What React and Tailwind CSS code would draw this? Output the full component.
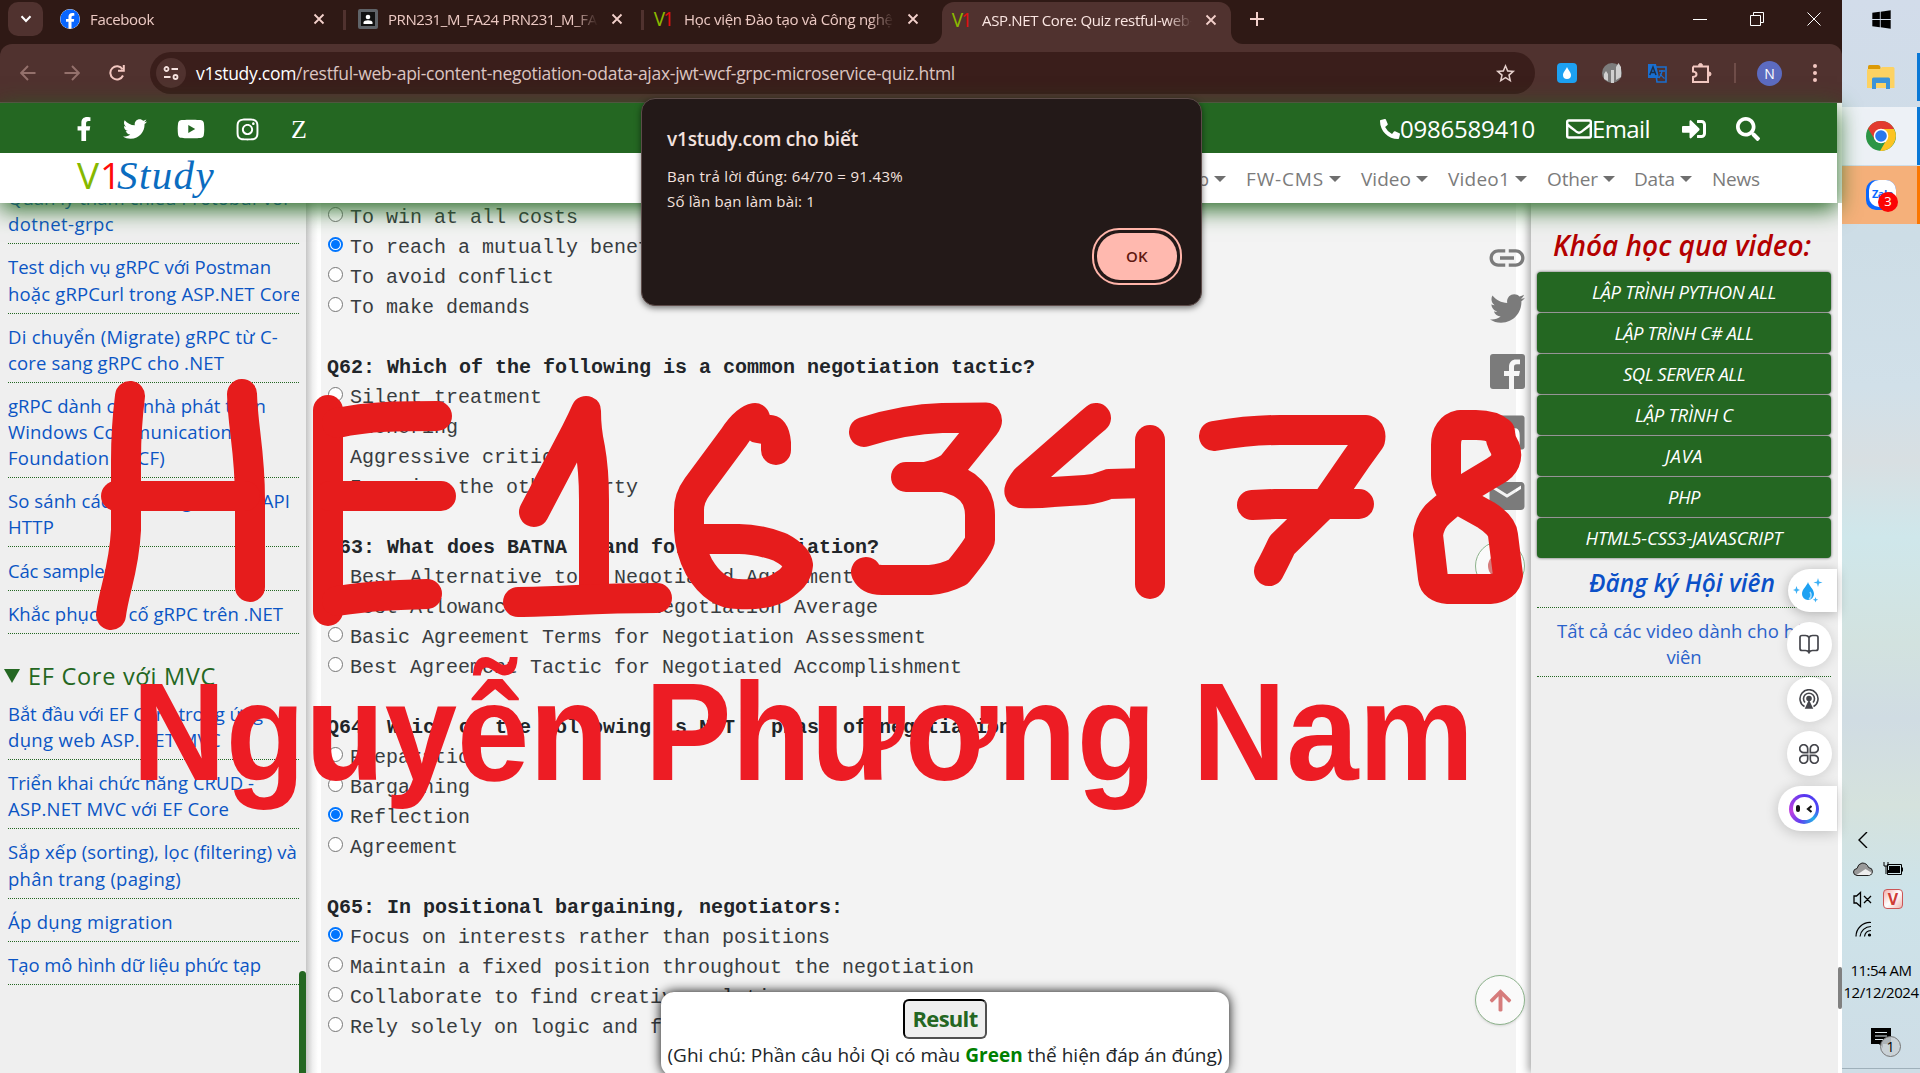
import React, { useLayoutEffect, useRef } from "react";
import {
  FaFacebookF, FaFacebook, FaTwitter, FaYoutube, FaInstagram, FaPhoneAlt, FaRegEnvelope,
  FaSignInAlt, FaSearch, FaLinkedin, FaArrowUp, FaWindows,
} from "react-icons/fa";
import { MdLink, MdEmail, MdGTranslate, MdOutlineExtension, MdStarBorder } from "react-icons/md";

/* A single line of text tuned to a given width, by tracking or by horizontal scale. */
function Fit({ w, scale = false, className = "", children }) {
  const ref = useRef(null);
  useLayoutEffect(() => {
    const el = ref.current;
    el.style.letterSpacing = "0px";
    el.style.transform = "none";
    const natural = el.getBoundingClientRect().width;
    const n = Math.max(1, el.textContent.length);
    if (scale) el.style.transform = "scaleX(" + w / natural + ")";
    else el.style.letterSpacing = (w - natural) / n + "px";
  }, [w, scale]);
  return (
    <span ref={ref} className={"inline-block origin-left whitespace-pre " + className}>{children}</span>
  );
}

function V1() {
  return (
    <span className="flex w-5 justify-center font-['Noto_Sans'] text-[19px] leading-5">
      <span className="text-[#8bb800]">V</span>
      <span className="-ml-0.5 text-[#e01010]">1</span>
    </span>
  );
}

function Cross({ className = "" }) {
  return (
    <svg viewBox="0 0 12 12" className={"size-3 shrink-0 " + className} fill="none" stroke="#f3d0cb" strokeWidth="1.8">
      <path d="M1.5 1.5l9 9M10.5 1.5l-9 9" />
    </svg>
  );
}

function Tab({ icon, children, w, className }) {
  return (
    <div className={"flex items-center " + className}>
      {icon}
      <div className="ml-[10px] w-[210px] shrink-0 overflow-hidden whitespace-nowrap [mask-image:linear-gradient(90deg,#000_88%,transparent)]">
        <Fit w={w}>{children}</Fit>
      </div>
      <Cross className="ml-[13px]" />
    </div>
  );
}

function TabStrip() {
  return (
    <div className="flex h-11 bg-[#2f1915] text-[15px] text-[#ecc9c3]">
      <div className="ml-2 mt-0.5 flex h-[34px] w-[35px] items-center justify-center rounded-[10px] bg-[#50322f]">
        <svg viewBox="0 0 12 8" className="h-2 w-3" fill="none" stroke="#fff" strokeWidth="2"><path d="M1.5 1.2L6 6l4.500-4.800" /></svg>
      </div>
      <Tab
        className="ml-[17px] h-[38px] w-[283px]"
        w={64}
        icon={<FaFacebook className="size-5 shrink-0 rounded-full bg-white text-[#0866ff]" />}
      >Facebook</Tab>
      <div className="mt-[10px] h-5 w-[3px] bg-[#50322f]" />
      <Tab
        className="ml-[12px] h-[38px] w-[283px]"
        w={225}
        icon={
          <svg viewBox="0 0 20 20" className="size-5 shrink-0">
            <rect width="20" height="20" rx="2" fill="#5f6368" /><rect x="3" y="3" width="14" height="14" fill="#111" />
            <circle cx="10" cy="8" r="2.300" fill="#fff" /><path d="M5.500 15v-1.500c0-3 9-3 9 0V15z" fill="#fff" />
          </svg>
        }
      >PRN231_M_FA24 PRN231_M_FA24</Tab>
      <div className="mt-[10px] h-5 w-[3px] bg-[#50322f]" />
      <Tab className="ml-[10px] h-[38px] w-[276px]" w={221} icon={<V1 />}>Học viện Đào tạo và Công nghệ V</Tab>
      <div className="w-3 self-end overflow-hidden bg-[#50322f]"><div className="h-3 rounded-br-xl bg-[#2f1915]" /></div>
      <div className="mt-0.5 flex w-[289px] rounded-t-xl bg-[#50322f] text-[#fbe6e2]">
        <Tab className="ml-[10px] h-[36px]" w={220} icon={<V1 />}>ASP.NET Core: Quiz restful-web-a</Tab>
      </div>
      <div className="w-3 self-end overflow-hidden bg-[#50322f]"><div className="h-3 rounded-bl-xl bg-[#2f1915]" /></div>
      <svg viewBox="0 0 14 14" className="ml-[7px] mt-3 size-3.5" stroke="#f3d0cb" strokeWidth="2"><path d="M7 0v14M0 7h14" /></svg>
      <div className="ml-auto mr-[21px] flex h-[38px] items-center gap-[43px]">
        <svg viewBox="0 0 14 14" className="size-3.5" stroke="#fff"><path d="M0 7.500h14" /></svg>
        <svg viewBox="0 0 14 14" className="size-3.5" stroke="#fff" fill="none"><path d="M.5 3.500h10v10H.5zM3.500 3V.5h10v10H11" /></svg>
        <svg viewBox="0 0 14 14" className="size-3.5" stroke="#fff" fill="none"><path d="M.5.5l13 13M13.500.5l-13 13" /></svg>
      </div>
    </div>
  );
}

function Toolbar() {
  return (
    <div className="bg-[#2f1915]">
      <div className="flex h-[59px] items-center rounded-t-xl border-b border-[#62504d] bg-[#50322f]">
        <svg viewBox="0 0 16 16" className="ml-5 size-4" fill="none" stroke="#94716c" strokeWidth="1.900"><path d="M15.500 8H1.500M8 1L1.200 8 8 15" /></svg>
        <svg viewBox="0 0 16 16" className="ml-[28px] size-4" fill="none" stroke="#94716c" strokeWidth="1.900"><path d="M.5 8h14M8 1l6.800 7L8 15" /></svg>
        <svg viewBox="0 0 16 16" className="ml-[29px] size-4" fill="none" stroke="#f3c8c1" strokeWidth="2"><path d="M14 10.500A6.600 6.600 0 1 1 13.500 4.300M14.800 0v5.800H9" /></svg>
        <div className="ml-[25px] flex h-[42px] w-[1385px] items-center rounded-full bg-[#3a1e1b]">
          <div className="ml-1.5 flex size-[30px] items-center justify-center rounded-full bg-[#50322f]">
            <svg viewBox="0 0 16 16" className="size-4" fill="none" stroke="#f5e2df" strokeWidth="1.800"><circle cx="3.500" cy="4" r="2" /><path d="M8.500 4H15M1 12h6.500" /><circle cx="12.500" cy="12" r="2" /></svg>
          </div>
          <div className="ml-[10px] text-[17.500px] text-[#dcc5c1]">
            <Fit w={759}><span className="text-white">v1study.com</span>/restful-web-api-content-negotiation-odata-ajax-jwt-wcf-grpc-microservice-quiz.html</Fit>
          </div>
          <MdStarBorder className="ml-auto mr-[18px] size-[23px] text-[#e6d0cc]" />
        </div>
        <div className="ml-[22px] flex size-5 items-center justify-center rounded-sm bg-[#1da1f2]">
          <svg viewBox="0 0 8 12" className="h-3 w-2" fill="#fff"><path d="M4 0c1 3 4 5 4 8a4 4 0 0 1-8 0c0-3 3-5 4-8z" /></svg>
        </div>
        <svg viewBox="0 0 20 20" className="ml-[25px] size-5"><circle cx="10" cy="10" r="10" fill="#7c7c7c" /><path d="M2 16v-5l2-3 2 3v7zM9 7h3v13H9zM14 17V4l2.500-4L19 4v10z" fill="#d0d0d0" /></svg>
        <svg viewBox="0 0 20 20" className="ml-[25px] size-5">
          <path d="M8 4h11v15h-9z" fill="none" stroke="#1a6fd0" strokeWidth="1.600" />
          <path d="M1 1h8l3 14H1z" fill="#1a6fd0" />
          <path d="M2.800 12L6 4l3 8M4 9.500h4" fill="none" stroke="#1b2f4a" strokeWidth="1.500" />
          <path d="M12 8h6M15 7v1c0 3-1.500 5-3 7M13 10.500c1 2 2.500 3.500 4.500 5" fill="none" stroke="#1a6fd0" strokeWidth="1.300" />
        </svg>
        <svg viewBox="0 0 22 22" className="ml-[24px] size-[22px]" fill="none" stroke="#f3c8c1" strokeWidth="2">
          <path d="M2 4.500h15v5M17 14v6H2v-5q3.500-.5 3.500-2.800T2 9.500V4.500M17 9.500V14" />
          <path d="M7.500 3.500a2 2 0 0 1 4 0zM18 10a2 2 0 0 1 0 4z" fill="#f3c8c1" strokeWidth="1" />
        </svg>
        <div className="ml-[21px] h-5 w-0.5 bg-[#6f4d49]" />
        <div className="ml-[21px] flex size-[25px] items-center justify-center rounded-full bg-[#5c6bc0] text-[14px] font-medium text-white">N</div>
        <div className="ml-[31px] flex flex-col gap-[3px]">
          <i className="size-1 rounded-full bg-[#f3c8c1]" /><i className="size-1 rounded-full bg-[#f3c8c1]" /><i className="size-1 rounded-full bg-[#f3c8c1]" />
        </div>
      </div>
    </div>
  );
}

function NavItem({ w, children, caret = true, className }) {
  return (
    <div className={"flex items-center " + className}>
      <Fit w={w}>{children}</Fit>
      {caret && <i className="ml-[5px] border-x-[6px] border-t-[6px] border-x-transparent border-t-[#6f6f6f]" />}
    </div>
  );
}

function SiteHeader() {
  return (
    <div className="relative z-10 mr-[5px] shadow-[0_6px_22px_#246722]">
      <div className="flex h-[50px] items-center bg-[#246722] pt-0.5 text-[24px] text-white">
        <FaFacebookF className="ml-[72px] size-[24px]" />
        <FaTwitter className="ml-[27px] size-[24px]" />
        <FaYoutube className="ml-[30px] size-[28px]" />
        <FaInstagram className="ml-[30px] size-[25px]" />
        <span className="ml-[31px] font-['Liberation_Serif'] text-[26px]">Z</span>
        <div className="ml-auto flex items-center">
          <FaPhoneAlt className="size-[20px]" />
          <Fit w={135}>0986589410</Fit>
          <FaRegEnvelope className="ml-[31px] size-[26px]" />
          <Fit w={58}>Email</Fit>
          <FaSignInAlt className="ml-[32px] size-[24px]" />
          <FaSearch className="ml-[30px] mr-[77px] size-[24px]" />
        </div>
      </div>
      <div className="flex h-[50px] items-center bg-white pt-0.5 text-[19px] text-[#7b7b7b]">
        <div className="ml-[77px] flex items-baseline pb-2 leading-none">
          <Fit w={23} className="text-[37px] text-[#86b800]">V</Fit>
          <Fit w={17} scale className="w-[17px] text-[37px] text-[#ff0a0a]">1</Fit>
          <Fit w={98} className="font-['Liberation_Serif'] text-[41px] italic text-[#0a6cc0]">Study</Fit>
        </div>
        <NavItem w={60} className="ml-auto">DevOp</NavItem>
        <NavItem w={78} className="ml-[20px]">FW-CMS</NavItem>
        <NavItem w={50} className="ml-[20px]">Video</NavItem>
        <NavItem w={62} className="ml-[20px]">Video1</NavItem>
        <NavItem w={51} className="ml-[20px]">Other</NavItem>
        <NavItem w={41} className="ml-[19px]">Data</NavItem>
        <NavItem w={48} className="ml-[20px] mr-[77px]" caret={false}>News</NavItem>
      </div>
    </div>
  );
}

function SideItem({ lines }) {
  return (
    <div className="flex flex-col border-b border-dotted border-[#246722] pb-[5.900px] pt-[10.200px] leading-[26.100px]">
      {lines.map(([t, w]) => <div key={t} className="h-[26.100px]"><Fit w={w}>{t}</Fit></div>)}
    </div>
  );
}

const LEFT_TOP = [
  [["Quản lý tham chiếu Protobuf với", 280], ["dotnet-grpc", 106]],
  [["Test dịch vụ gRPC với Postman", 263], ["hoặc gRPCurl trong ASP.NET Core", 293]],
  [["Di chuyển (Migrate) gRPC từ C-", 270], ["core sang gRPC cho .NET", 216]],
  [["gRPC dành cho nhà phát triển", 258], ["Windows Communication", 224], ["Foundation (WCF)", 157]],
  [["So sánh các dịch vụ gRPC với API", 282], ["HTTP", 46]],
  [["Các samples", 105]],
  [["Khắc phục sự cố gRPC trên .NET", 275]],
];
const LEFT_BOTTOM = [
  [["Bắt đầu với EF Core trong ứng", 255], ["dụng web ASP.NET MVC", 213]],
  [["Triển khai chức năng CRUD -", 246], ["ASP.NET MVC với EF Core", 221]],
  [["Sắp xếp (sorting), lọc (filtering) và", 289], ["phân trang (paging)", 173]],
  [["Áp dụng migration", 165]],
  [["Tạo mô hình dữ liệu phức tạp", 253]],
];

function LeftSidebar() {
  return (
    <div className="flex w-[306px] shrink-0 bg-[#efefef]">
      <div className="w-[299px] overflow-hidden pl-2 text-[18.500px] text-[#0b55c4]">
        <div className="-mt-[28px]">{LEFT_TOP.map((l) => <SideItem key={l[0][0]} lines={l} />)}</div>
        <div className="-ml-2 flex h-[57px] items-center pl-1 pt-7 text-[23.500px] font-medium text-[#246722]">
          <i className="mr-2 border-x-[8px] border-t-[14px] border-x-transparent border-t-[#246722]" />
          <Fit w={188}>EF Core với MVC</Fit>
        </div>
        <div>{LEFT_BOTTOM.map((l) => <SideItem key={l[0][0]} lines={l} />)}</div>
      </div>
      <div className="mt-[768px] w-[7px] rounded-t bg-[#246722]" />
    </div>
  );
}

const QUIZ = [
  ["o", "To win at all costs"], ["x", "To reach a mutually beneficial agreement"], ["o", "To avoid conflict"], ["o", "To make demands"], ["", ""],
  ["q", "Q62: Which of the following is a common negotiation tactic?"],
  ["o", "Silent treatment"], ["o", "Anchoring"], ["o", "Aggressive criticism"], ["o", "Ignoring the other party"], ["", ""],
  ["q", "Q63: What does BATNA stand for in negotiation?"],
  ["o", "Best Alternative to a Negotiated Agreement"], ["o", "Best Allowance All About Negotiation Average"],
  ["o", "Basic Agreement Terms for Negotiation Assessment"], ["o", "Best Agreement Tactic for Negotiated Accomplishment"], ["", ""],
  ["q", "Q64: Which of the following is NOT a phase of negotiation?"],
  ["o", "Preparation"], ["o", "Bargaining"], ["x", "Reflection"], ["o", "Agreement"], ["", ""],
  ["q", "Q65: In positional bargaining, negotiators:"],
  ["x", "Focus on interests rather than positions"], ["o", "Maintain a fixed position throughout the negotiation"],
  ["o", "Collaborate to find creative solutions"], ["o", "Rely solely on logic and facts"],
];

function Quiz() {
  return (
    <div className="w-[1195px] shrink-0 bg-[#f3f3f3] pl-1.5 font-['Liberation_Mono',monospace] text-[20px] leading-[30px] text-[#212529]">
      {QUIZ.map(([k, t], i) => (
        <div key={i} className="flex h-[30px] whitespace-pre">
          {k === "o" && <i className="ml-px mr-[7px] mt-1 size-[15px] rounded-full border border-[#767676] bg-white" />}
          {k === "x" && (
            <i className="ml-px mr-[7px] mt-1 flex size-[15px] items-center justify-center rounded-full border-2 border-[#0075ff] bg-white">
              <b className="size-[9px] rounded-full bg-[#0075ff]" />
            </i>
          )}
          <span className={k === "q" ? "font-bold" : "text-[#383c40]"}>{t}</span>
        </div>
      ))}
    </div>
  );
}

const COURSES = [
  ["LẬP TRÌNH PYTHON ALL", 184], ["LẬP TRÌNH C# ALL", 139], ["SQL SERVER ALL", 122], ["LẬP TRÌNH C", 98],
  ["JAVA", 38], ["PHP", 32], ["HTML5-CSS3-JAVASCRIPT", 197],
];

function RightSidebar() {
  return (
    <div className="flex w-[307px] shrink-0 flex-col items-center bg-[#efefef] px-[6.500px] shadow-[-3px_0_8px_#aaa]">
      <div className="mt-[22px] h-[47px] text-[28px] font-semibold italic leading-[41px] text-[#b40000]"><Fit w={262} scale className="w-[262px]">Khóa học qua video:</Fit></div>
      <div className="flex w-full flex-col gap-px">
        {COURSES.map(([t, w]) => (
          <div key={t} className="flex h-10 items-center justify-center rounded bg-[#246722] text-[18.500px] italic text-white shadow-[0_0_3px_#555]">
            <Fit w={w}>{t}</Fit>
          </div>
        ))}
      </div>
      <div className="flex h-[50px] w-full items-center justify-center border-b border-dotted border-[#246722] pt-0.5 text-[24.500px] font-semibold italic text-[#0b50c8]">
        <Fit w={190} scale className="w-[190px]">Đăng ký Hội viên</Fit>
      </div>
      <div className="flex h-[69px] w-full flex-col items-center border-b border-dotted border-[#246722] pt-[10px] text-[18.500px] leading-[26px] text-[#2a62cb]">
        <Fit w={254}>Tất cả các video dành cho hội</Fit>
        <Fit w={35}>viên</Fit>
      </div>
    </div>
  );
}

/* Share rail that floats over the seam between quiz and sidebar. */
function ShareRail() {
  return (
    <div className="absolute left-[1475px] top-[203px] z-10 flex w-[50px] flex-col items-end text-[#7b7b7b]">
      <MdLink className="-mr-[3px] mt-[34px] size-[42px]" />
      <FaTwitter className="mt-[12px] size-[35px]" />
      <svg viewBox="0 0 35 35" className="mt-[28px] size-[35px]"><rect width="35" height="35" rx="3" fill="#7b7b7b" /><path d="M19 35V22h-5v-5h5v-4c0-5 3-7.500 7-7.500h4v4.700h-3c-2.500 0-3 1.300-3 3V17h6l-1 5h-5v13z" fill="#f6f6f6" /></svg>
      <FaLinkedin className="mt-[24px] size-[39px] w-[35px]" />
      <MdEmail className="-mr-[3px] mt-[23px] size-[42px]" />
      <div className="mt-[24px] flex size-[50px] items-center justify-center rounded-full border border-[#8db38c] bg-[#fafafa]">
        <i className="size-6 rounded-full border-[5px] border-[#d67c7c]" />
      </div>
      <div className="mt-[384px] flex size-[50px] items-center justify-center rounded-full border border-[#8db38c] bg-[#fafafa] shadow">
        <FaArrowUp className="size-[25px] text-[#d67c7c]" />
      </div>
    </div>
  );
}

/* Assistant buttons docked to the right edge of the page. */
function AssistantDock() {
  const round = "mr-[5px] flex size-[45px] items-center justify-center rounded-full bg-white pr-0.5 shadow-[0_2px_12px_#0002]";
  return (
    <div className="absolute left-[1778px] top-[569px] z-10 flex w-[59px] flex-col items-end gap-[9.800px]">
      <div className="flex h-[43px] w-[49px] items-center rounded-l-full bg-white pl-[5px] shadow-[0_2px_12px_#0004]">
        <svg viewBox="0 0 30 26" className="h-[26px] w-[30px]" fill="#1da1f2">
          <path d="M15 4c1 4 6 7 6 12a6 6 0 0 1-12 0c0-5 5-8 6-12z" />
          <path d="M17 14c2 3 1 6-1 7" stroke="#a9dcfb" strokeWidth="1.500" fill="none" />
          <path d="M25 0l1 3.500L29.500 4.500 26 5.500 25 9l-1-3.500-3.500-1 3.500-1zM3.500 8l1 3L7 12l-2.500 1-1 3-1-3L0 12l2.500-1zM22.500 19l.7 2 2 .7-2 .7-.7 2-.7-2-2-.7 2-.7z" fill="#3db0f5" />
        </svg>
      </div>
      <div className={round}>
        <svg viewBox="0 0 20 20" className="size-5" fill="none" stroke="#45464c" strokeWidth="1.700"><path d="M10 3.500Q9 1.500 6.500 1.500H3Q1 1.500 1 3.500v11q0 2 2 2h3.500q2.500 0 3.500 2 1-2 3.500-2H17q2 0 2-2v-11q0-2-2-2h-3.500Q11 1.500 10 3.500zm0 0V18" /></svg>
      </div>
      <div className={round}>
        <svg viewBox="0 0 20 20" className="size-5" fill="none" stroke="#45464c" strokeWidth="1.600"><path d="M5.500 17.500a9 9 0 1 1 9 0M6 13.500a5.500 5.500 0 1 1 8 0" /><circle cx="10" cy="9.500" r="2" fill="#45464c" /><path d="M10 12.500l3 6.500H7z" fill="#45464c" /></svg>
      </div>
      <div className={round}>
        <svg viewBox="0 0 20 20" className="size-5" fill="none" stroke="#45464c" strokeWidth="1.700"><path d="M8.700 8.700H5a4 4 0 1 1 3.700-4zM11.300 8.700H15a4 4 0 1 0-3.700-4zM8.700 11.300H5a4 4 0 1 0 3.700 4zM11.300 11.300H15a4 4 0 1 1-3.700 4z" /></svg>
      </div>
      <div className="flex h-[45px] w-[59px] items-center rounded-l-full bg-white pl-[11px] shadow-[0_2px_14px_#0003]">
        <div className="flex size-[30px] items-center justify-center rounded-full bg-[conic-gradient(#5636f0,#4a48f5_25%,#24aee8_38%,#6040f0_55%,#c040e0_72%,#5a38f0)]">
          <div className="flex size-[23px] items-center justify-center gap-1.5 rounded-full bg-white">
            <i className="h-[7px] w-1 rounded-full bg-[#151515]" />
            <svg viewBox="0 0 6 8" className="h-2 w-1.5" fill="none" stroke="#151515" strokeWidth="2.200"><path d="M5.500 1L2 4l3.500 3" /></svg>
          </div>
        </div>
      </div>
    </div>
  );
}

function AlertDialog() {
  return (
    <div className="absolute left-[641px] top-[98px] z-20 flex h-[208px] w-[561px] flex-col rounded-[14px] border border-[#5d4b49] bg-[#231918] pl-[25px] pt-[26px] text-[#f3e1de] shadow-[0_2px_6px_#0008]">
      <div className="h-[39px] text-[19px] font-semibold leading-[28px]"><Fit w={191}>v1study.com cho biết</Fit></div>
      <div className="text-[15px] leading-[25px]"><Fit w={236}>Bạn trả lời đúng: 64/70 = 91.43%</Fit></div>
      <div className="text-[15px] leading-[25px]"><Fit w={148}>Số lần bạn làm bài: 1</Fit></div>
      <div className="ml-auto mr-[19px] mt-[14px] flex h-[57px] w-[90px] items-center justify-center rounded-[27px] border-[2.500px] border-[#ffb4a9]">
        <div className="flex h-[47px] w-[80px] items-center justify-center rounded-[23px] bg-[#ffb9af] text-[15px] font-semibold text-[#5f1810]"><Fit w={22}>OK</Fit></div>
      </div>
    </div>
  );
}

function ResultBox() {
  return (
    <div className="absolute left-[661px] top-[992px] z-10 flex h-[84px] w-[568px] flex-col items-center rounded-[13px] bg-white pt-[7px] shadow-[0_0_12px_#000]">
      <div className="flex h-10 w-[84px] items-center justify-center rounded-md border-2 border-b-[#505050] border-l-black border-r-[#505050] border-t-black bg-[#efefef] pb-0.5 text-[22px] font-bold text-[#246722]">
        <Fit w={65}>Result</Fit>
      </div>
      <div className="text-[19px] leading-[32px] text-[#212529]">
        <Fit w={555}>(Ghi chú: Phần câu hỏi Qi có màu <b className="text-[#008000]">Green</b> thể hiện đáp án đúng)</Fit>
      </div>
    </div>
  );
}

const STROKES = [
  "M130 396C127 420 126 440 126 460V530C124 570 114 590 111 615",
  "M242 394C243 430 250 450 250 500V587", "M116 496H245",
  "M328 410V611", "M337 423C370 416 400 416 437 416", "M330 496H441", "M337 601C370 596 390 595 427 594",
  "M534 512L576 432Q582 420 586 411Q586 430 590 448Q594 470 594 500V587", "M518 602C560 602 590 598 657 598",
  "M776 450V443Q775 431 770 430L758 428L755 418Q745 420 734 437L697 487Q689 498 689 510V530Q690 550 699 567Q715 594 738 594Q770 596 785 584Q797 576 798 565Q797 556 780 547Q755 538 735 539H695",
  "M864 432Q905 419 942 418L986 417.500Q988 421 985 425L951 467Q940 474 926 477H906H944Q980 485 980 515V540Q980 545 958 572Q944 579 930 580H882Q870 580 866 572",
  "M1096 418L1090 423L1026 479Q1016 492 1021 493Q1035 494 1053 492L1085 490Q1097 489 1109 484L1146 483", "M1150 440V584",
  "M1214 436Q1250 430 1280 430H1366Q1372 432 1370 440L1357 458L1328 500L1282 545Q1275 560 1269 571", "M1252 505L1275 504H1359",
  "M1500 432Q1492 425 1476 425H1460Q1446 428 1446 445V475Q1446 487 1459 500L1486 515Q1502 525 1503 535L1508 575Q1506 588 1490 589H1448Q1434 588 1433 578L1428 535Q1430 520 1440 512L1470 486L1495 471Q1510 463 1505 448Q1500 440 1500 432",
];

/* Pen marks and the author's name written over the whole desktop. */
function Annotation() {
  return (
    <>
      <svg viewBox="0 0 1920 1073" className="pointer-events-none absolute left-0 top-0 z-30 h-[1073px] w-[1920px]" fill="none" stroke="#e61c1c" strokeWidth="30" strokeLinecap="round" strokeLinejoin="round">
        {STROKES.map((d) => <path key={d} d={d} />)}
      </svg>
      <div className="absolute left-[132px] top-[657px] z-30 font-['Liberation_Sans'] text-[140px] font-bold leading-[150px] text-[#ed1c24]">
        <Fit w={1342} scale>Nguyễn Phương Nam</Fit>
      </div>
    </>
  );
}

function Taskbar() {
  return (
    <div className="flex w-[78px] shrink-0 flex-col overflow-hidden bg-[linear-gradient(180deg,#d2dcea_0,#cddde6_22%,#d1e0e9_36%,#d8dfe2_43%,#cfe7eb_50%,#d2e2df_60%,#d0dce3_67%,#d5e2dd_75%,#cde3e9_83%,#cedde6_100%)] text-black">
      <div className="flex h-[49px] justify-center pt-[9px]"><FaWindows className="size-[21px]" /></div>
      <div className="flex h-[58px] justify-end">
        <svg viewBox="0 0 28 24" className="mr-[22px] mt-[16px] h-6 w-7"><path d="M1 1.500q0-1.500 1.500-1.500H11q2 0 2.500 2v3H1z" fill="#dc9a06" /><path d="M0 5q0-1 1-1h12l2-2h11q1.500 0 1.500 1.500V23H0z" fill="#fdd262" /><path d="M5 24V14q0-1.500 1.500-1.500h15Q23 12.500 23 14v10h-4v-6H9v6z" fill="#3c93d8" /></svg>
        <div className="mt-1 h-12 w-[3px] bg-[#0a78d6]" />
      </div>
      <div className="flex h-[58px] items-center justify-end bg-[#edf1f6]">
        <svg viewBox="0 0 30 30" className="mr-[21px] size-[30px]">
          <circle cx="15" cy="15" r="15" fill="#2c9646" />
          <path d="M15 15L2 7.500A15 15 0 0 1 28 7.500z" fill="#e23b30" /><path d="M15 8h13A15 15 0 0 1 14 30l7-12z" fill="#fcc322" /><path d="M2 7.500L9 19l6-11z" fill="#e23b30" />
          <circle cx="15" cy="15" r="7.300" fill="#fff" /><circle cx="15" cy="15" r="5.800" fill="#2878ee" />
        </svg>
        <div className="h-full w-[3px] bg-[#0a78d6]" />
      </div>
      <div className="mt-px flex h-[58px] items-center justify-end bg-[#f5b07a]">
        <div className="relative mr-[21px] size-[30px] overflow-visible rounded-[10px] bg-[#0a68ff]">
          <div className="ml-[3px] h-[27px] w-[27px] rounded-[10px] bg-white pl-[3px] pt-2 text-[11px] font-bold leading-none text-[#0a68ff]"><Fit w={21}>Zalo</Fit></div>
          <div className="absolute left-3 top-3 flex size-5 items-center justify-center rounded-full bg-[#fb0505] text-[13px] text-white">3</div>
        </div>
        <div className="h-full w-[3px] bg-[#fb7600]" />
      </div>
      <svg viewBox="0 0 10 16" className="ml-[16px] mt-[608px] h-4 w-2.5" fill="none" stroke="#000" strokeWidth="1.400"><path d="M9 0L1 8l8 8" /></svg>
      <div className="ml-[11px] mt-[11px] grid w-[52px] grid-cols-[20px_20px] gap-x-[10px] gap-y-[10px]">
        <svg viewBox="0 0 20 20" className="size-5"><path d="M4 16.500Q.5 16 .5 13 .5 10 4 9.500 5 5 9 4q5 0 6.500 4.500 4 .5 4 4t-4 4z" fill="#999" stroke="#222" /><path d="M3.500 16l9-6 6.500 4-2.500 2z" fill="#eee" /></svg>
        <svg viewBox="0 0 20 20" className="size-5"><path d="M4.500 5.500h14v10h-14zM19.500 8.500v4" fill="none" stroke="#000" /><path d="M6 7h11v7H4v-3h2z" /><path d="M1 3v4h4V3M3 7v8" stroke="#000" fill="none" /></svg>
        <svg viewBox="0 0 20 20" className="size-5" fill="none" stroke="#000" strokeWidth="1.300"><path d="M1 7h2.500l4-3.500v14l-4-3.500H1zM11 7l7 7M18 7l-7 7" /></svg>
        <div className="flex size-5 items-center justify-center rounded-sm border border-[#c55] bg-[linear-gradient(135deg,#f3b0ac,#fff_50%,#f0b5b0)] text-[16px] font-bold text-[#cf3b35]">V</div>
        <svg viewBox="0 0 20 20" className="size-5" fill="none" stroke="#000" strokeWidth="1.200"><path d="M3 17.500A14 14 0 0 1 18 3.500M7 17.500A11 11 0 0 1 18 7.500M11.500 17.500a7 7 0 0 1 6.500-6" /><circle cx="16.500" cy="16" r="1" fill="#000" /></svg>
      </div>
      <div className="mt-[20px] flex flex-col items-center text-[15px] leading-[22px]"><Fit w={61}>11:54 AM</Fit><Fit w={75}>12/12/2024</Fit></div>
      <div className="relative ml-[29px] mt-[25px] w-8">
        <svg viewBox="0 0 20 20" className="size-5"><path d="M0 0h20v16h-8v4l-4-4H0z" /><path d="M4 4.500h12M4 8h12M4 11.500h8" stroke="#dde8ee" /></svg>
        <div className="absolute left-[9px] top-[8px] flex size-[21px] items-center justify-center rounded-full border border-[#777] bg-[#c9d0d4dd] text-[14px]">1</div>
      </div>
      <div className="mt-auto h-[5px] border-t border-[#9fb0ba]" />
    </div>
  );
}

export default function App() {
  return (
    <div className="relative flex h-[1073px] w-[1920px] overflow-hidden bg-white font-['Open_Sans','Noto_Sans',sans-serif]">
      <div className="flex w-[1842px] shrink-0 flex-col">
        <TabStrip />
        <Toolbar />
        <SiteHeader />
        <div className="flex h-[870px] overflow-hidden">
          <LeftSidebar />
          <div className="w-[15px] shrink-0 bg-[linear-gradient(90deg,#c6c6c6,#f0f0f0_45%,#fff_80%)]" />
          <Quiz />
          <div className="w-[14.500px] shrink-0" />
          <RightSidebar />
          <div className="z-10 flex-1 bg-white pt-[764px]"><div className="h-[42px] rounded-sm bg-[#808080]" /></div>
        </div>
      </div>
      <Taskbar />
      <ShareRail />
      <AssistantDock />
      <ResultBox />
      <AlertDialog />
      <Annotation />
    </div>
  );
}
